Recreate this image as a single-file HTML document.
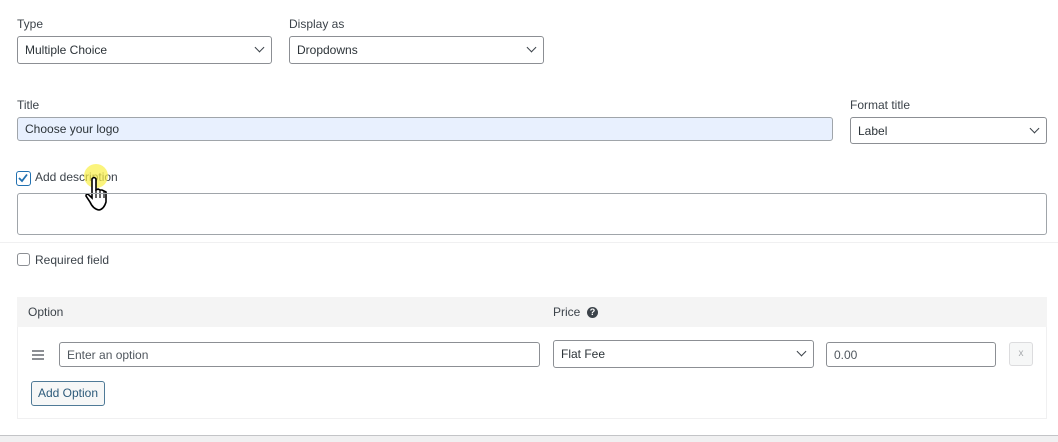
<!DOCTYPE html>
<html><head><meta charset="utf-8"><style>
*{box-sizing:border-box;margin:0;padding:0}
body{width:1058px;height:442px;background:#fff;position:relative;overflow:hidden;font-family:"Liberation Sans",sans-serif;font-size:12px;color:#3c434a}
.a{position:absolute}
.lbl{font-size:12px;color:#3c434a}
.box{position:absolute;border:1px solid #8c8f94;border-radius:3px;background:#fff;font-size:12px;color:#2c3338;padding-left:7px;display:flex;align-items:center}
.chev{position:absolute;right:8px;top:50%;width:7px;height:7px;border-right:1.6px solid #3c434a;border-bottom:1.6px solid #3c434a;transform:rotate(45deg);margin-top:-6px}
</style></head><body>
<div class="a lbl" style="left:17px;top:17px">Type</div>
<div class="box" style="left:17px;top:36px;width:255px;height:28px">Multiple Choice<span class="chev"></span></div>
<div class="a lbl" style="left:289px;top:17px">Display as</div>
<div class="box" style="left:289px;top:36px;width:255px;height:28px">Dropdowns<span class="chev"></span></div>

<div class="a lbl" style="left:17px;top:98px">Title</div>
<div class="box" style="left:17px;top:117px;width:816px;height:24px;background:#e8f0fe;border-color:#a0a5aa">Choose your logo</div>
<div class="a lbl" style="left:850px;top:98px">Format title</div>
<div class="box" style="left:850px;top:117px;width:197px;height:27px">Label<span class="chev"></span></div>

<div class="a" style="left:16px;top:171px;width:15px;height:15px;border:1.5px solid #2271b1;border-radius:3px"><svg width="12" height="12" viewBox="0 0 12 12" style="position:absolute;left:0;top:0"><path d="M2 6 L5 9 L10 2.5" stroke="#2271b1" stroke-width="1.8" fill="none"/></svg></div>
<div class="a lbl" style="left:35px;top:170px">Add description</div>
<div class="a" style="left:84px;top:164px;width:24px;height:24px;border-radius:50%;background:rgba(250,240,70,0.7)"></div>
<svg class="a" style="left:85px;top:176px" width="28" height="40" viewBox="0 0 28 40"><path d="M7 3 Q9 0 11 3 L11 14 L13 13 L15 14 L17 14 L19 15 L21 16 L21 26 Q19 33 14 34 Q8 33 5 26 L1 20 Q1 17 4 19 L7 22 Z" fill="#fff" stroke="#000" stroke-width="1.6"/><path d="M11 13 V22 M15 14 V22 M19 15 V22" stroke="#000" stroke-width="1.2"/></svg>

<div class="a" style="left:17px;top:193px;width:1030px;height:42px;border:1px solid #a0a5aa;border-radius:3px"></div>
<div class="a" style="left:0;top:242px;width:1058px;height:1px;background:#f0f0f1"></div>

<div class="a" style="left:17px;top:253px;width:13px;height:13px;border:1px solid #8c8f94;border-radius:3px"></div>
<div class="a lbl" style="left:35px;top:253px">Required field</div>

<div class="a" style="left:17px;top:297px;width:1030px;height:122px;border:1px solid #f0f0f1"></div>
<div class="a" style="left:17px;top:297px;width:1030px;height:30px;background:#f4f4f4"></div>
<div class="a lbl" style="left:28px;top:305px">Option</div>
<div class="a lbl" style="left:553px;top:305px">Price</div>
<div class="a" style="left:587px;top:307px;width:11px;height:11px;border-radius:50%;background:#3c434a;color:#fff;font-size:9px;font-weight:bold;text-align:center;line-height:11px">?</div>

<div class="a" style="left:32px;top:350px;width:12px;height:2px;background:#8c8f94;box-shadow:0 4px 0 #8c8f94,0 8px 0 #8c8f94"></div>
<div class="box" style="left:59px;top:342px;width:481px;height:25px;color:#50575e">Enter an option</div>
<div class="box" style="left:553px;top:340px;width:261px;height:28px">Flat Fee<span class="chev"></span></div>
<div class="box" style="left:826px;top:342px;width:170px;height:25px;color:#50575e">0.00</div>
<div class="a" style="left:1009px;top:342px;width:24px;height:24px;border:1px solid #dcdcde;border-radius:3px;background:#f6f7f7;color:#a7aaad;font-size:10px;text-align:center;line-height:22px">x</div>
<div class="a" style="left:31px;top:381px;width:74px;height:25px;border:1px solid #4f7a97;border-radius:3px;background:#f6f7f7;color:#2c5a7a;font-size:12px;text-align:center;line-height:23px">Add Option</div>

<div class="a" style="left:0;top:435px;width:1058px;height:7px;background:#f0f0f1;border-top:1px solid #c3c4c7"></div>
</body></html>
